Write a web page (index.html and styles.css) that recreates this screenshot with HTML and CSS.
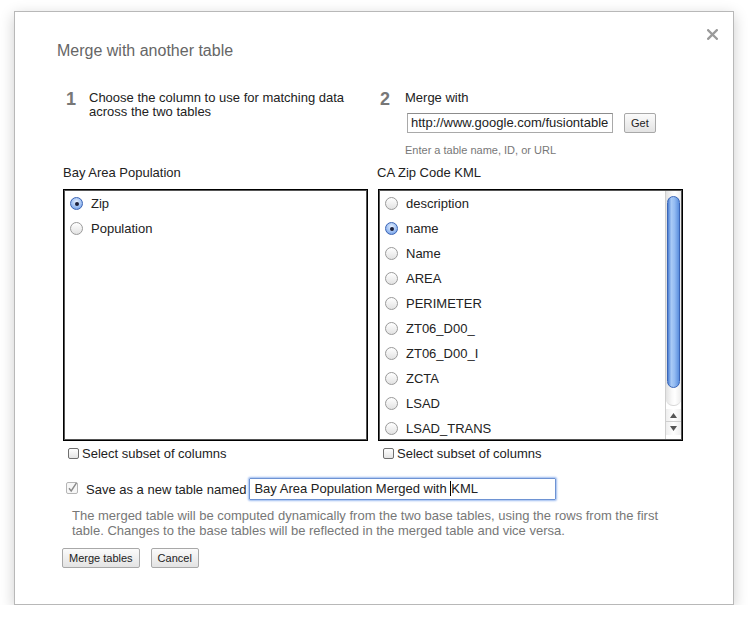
FILE: index.html
```html
<!DOCTYPE html>
<html>
<head>
<meta charset="utf-8">
<link rel="stylesheet" href="styles.css">
</head>
<body>
<div class="dialog">
  <svg class="close" width="11" height="11" viewBox="0 0 11 11"><path d="M1.2 1.2L9.8 9.8M9.8 1.2L1.2 9.8" stroke="#9a9a9a" stroke-width="2.3" stroke-linecap="square"/></svg>
  <h1 class="title">Merge with another table</h1>
  <div class="grid">
    <div class="step step-1">
      <span class="num">1</span>
      <div class="step-text">Choose the column to use for matching data<br>across the two tables</div>
    </div>
    <div class="step step-2">
      <span class="num">2</span>
      <div class="step-body">
        <div class="step-text">Merge with</div>
        <div class="url-row">
          <div class="url-input">http://www.google.com/fusiontable</div>
          <button class="btn get">Get</button>
        </div>
        <div class="hint">Enter a table name, ID, or URL</div>
      </div>
    </div>
    <div class="col-label">Bay Area Population</div>
    <div class="col-label col-label-right">CA Zip Code KML</div>
    <div class="list">
      <div class="items">
        <div class="opt"><span class="radio checked"></span>Zip</div>
        <div class="opt"><span class="radio"></span>Population</div>
      </div>
    </div>
    <div class="list">
      <div class="items">
        <div class="opt"><span class="radio"></span>description</div>
        <div class="opt"><span class="radio checked"></span>name</div>
        <div class="opt"><span class="radio"></span>Name</div>
        <div class="opt"><span class="radio"></span>AREA</div>
        <div class="opt"><span class="radio"></span>PERIMETER</div>
        <div class="opt"><span class="radio"></span>ZT06_D00_</div>
        <div class="opt"><span class="radio"></span>ZT06_D00_I</div>
        <div class="opt"><span class="radio"></span>ZCTA</div>
        <div class="opt"><span class="radio"></span>LSAD</div>
        <div class="opt"><span class="radio"></span>LSAD_TRANS</div>
      </div>
      <div class="scrollbar">
        <div class="track">
          <div class="thumb"></div>
        </div>
        <div class="arrow arrow-up"><svg width="7" height="5" viewBox="0 0 7 5"><path d="M3.5 0L7 5H0z" fill="#555"/></svg></div>
        <div class="arrow arrow-down"><svg width="7" height="5" viewBox="0 0 7 5"><path d="M0 0H7L3.5 5z" fill="#555"/></svg></div>
      </div>
    </div>
    <div class="subset"><span class="checkbox"></span>Select subset of columns</div>
    <div class="subset"><span class="checkbox"></span>Select subset of columns</div>
  </div>
  <div class="save-row">
    <span class="checkbox-checked"><svg width="12" height="12" viewBox="0 0 12 12"><rect x="0.5" y="0.5" width="11" height="11" rx="1.5" fill="#f7f7f7" stroke="#b5b5b5"/><path d="M3 6.2L5.2 9L10.5 0.8" fill="none" stroke="#8a8a8a" stroke-width="1.4"/></svg></span>
    <span class="save-label">Save as a new table named</span>
    <div class="name-input">Bay Area Population Merged with <span class="caret"></span>KML</div>
  </div>
  <p class="desc">The merged table will be computed dynamically from the two base tables, using the rows from the first<br>table. Changes to the base tables will be reflected in the merged table and vice versa.</p>
  <div class="actions">
    <button class="btn">Merge tables</button>
    <button class="btn">Cancel</button>
  </div>
</div>
</body>
</html>
```

FILE: styles.css
```css
* { box-sizing: border-box; }
html, body { margin: 0; padding: 0; background: #fff; }
body {
  font-family: "Liberation Sans", Arial, sans-serif;
  font-size: 13px;
  color: #222;
}
.dialog {
  position: relative;
  margin: 11px 0 0 14px;
  width: 720px;
  height: 594px;
  border: 1px solid #b8b8b8;
  background: #fff;
  box-shadow: 0 4px 14px rgba(0, 0, 0, 0.2);
  padding: 29px 50px 0 48px;
}
.close {
  position: absolute;
  top: 17px;
  right: 15px;
}
.title {
  margin: 0 0 0 -6px;
  font-size: 16px;
  line-height: 20px;
  font-weight: normal;
  color: #666;
}
.grid {
  margin-top: 30px;
  display: grid;
  grid-template-columns: 305px 305px;
  column-gap: 10px;
}
.step {
  display: flex;
  align-items: flex-start;
}
.step-1 { padding-left: 3px; }
.step-2 { padding-left: 2px; }
.num {
  display: block;
  width: 23px;
  flex: none;
  font-size: 18px;
  line-height: 20px;
  font-weight: bold;
  color: #777;
  margin-top: -2px;
}
.step-2 .num { width: 25px; }
.step-text {
  line-height: 14px;
  color: #222;
}
.url-row {
  display: flex;
  margin-top: 8px;
  margin-left: 2px;
}
.url-input {
  width: 206px;
  height: 20px;
  border: 1px solid #a9a9a9;
  border-top-color: #8c8c8c;
  padding: 0 3px;
  line-height: 18px;
  white-space: nowrap;
  overflow: hidden;
  color: #222;
}
.btn {
  font-family: "Liberation Sans", Arial, sans-serif;
  font-size: 11px;
  height: 20px;
  padding: 0 6px;
  border: 1px solid #a8a8a8;
  border-radius: 2px;
  background: linear-gradient(#fbfbfb, #e3e3e3);
  color: #222;
  line-height: 18px;
}
.get { margin-left: 11px; }
.hint {
  margin-top: 11px;
  font-size: 11px;
  line-height: 13px;
  color: #777;
}
.col-label {
  margin-top: 8px;
  line-height: 15px;
  color: #222;
}
.col-label-right { margin-left: -1px; }
.list {
  margin-top: 9px;
  height: 252px;
  border: 1px solid #000;
  box-shadow: inset 0 0 0 1px #555;
  display: flex;
  overflow: hidden;
}
.items {
  flex: 1;
  padding-top: 1px;
}
.opt {
  display: flex;
  align-items: center;
  height: 25px;
  padding-left: 6px;
  color: #222;
}
.radio {
  width: 13px;
  height: 13px;
  flex: none;
  border-radius: 50%;
  border: 1px solid #9a9a9a;
  background: linear-gradient(#ffffff, #e2e2e2);
  margin-right: 8px;
  display: flex;
  align-items: center;
  justify-content: center;
}
.radio.checked {
  border-color: #3b64b5;
  background: radial-gradient(circle at 50% 35%, #e6f0ff 0, #9fc0f2 55%, #5d8fe0 100%);
}
.radio.checked::after {
  content: "";
  width: 4px;
  height: 4px;
  border-radius: 50%;
  background: #1b1f3a;
}
.scrollbar {
  width: 16px;
  flex: none;
  margin: 1px 1px 1px 0;
  border-left: 1px solid #cfcfcf;
  display: flex;
  flex-direction: column;
  background: #fff;
}
.track {
  flex: 1;
  padding: 5px 1px 0 1px;
  background: linear-gradient(to right, #e2e2e2, #f9f9f9 40%, #ffffff 60%, #ececec);
  border-bottom: 1px solid #d8d8d8;
  border-radius: 0 0 7px 7px;
}
.thumb {
  height: 192px;
  border-radius: 7px;
  border: 1px solid #3a66b8;
  background: linear-gradient(to right, #4c7fd2, #a9cbf6 30%, #93bbf2 60%, #5b8fde);
}
.arrow {
  height: 13px;
  display: flex;
  align-items: center;
  justify-content: center;
  background: linear-gradient(to right, #eeeeee, #ffffff 50%, #eeeeee);
}
.arrow-up { margin-top: 3px; border-bottom: 1px solid #cfcfcf; }
.arrow-down { margin-bottom: 4px; }
.subset {
  margin-top: 5px;
  display: flex;
  align-items: center;
  line-height: 15px;
  padding-left: 5px;
  color: #222;
}
.checkbox {
  width: 11px;
  height: 11px;
  flex: none;
  border: 1px solid #6f6f6f;
  border-radius: 2px;
  background: linear-gradient(#ffffff, #e4e4e4);
  margin-right: 3px;
}
.save-row {
  margin-top: 17px;
  display: flex;
  align-items: center;
  height: 22px;
  padding-left: 3px;
}
.checkbox-checked {
  display: flex;
  width: 12px;
  height: 12px;
  margin-right: 8px;
  margin-top: -2px;
}
.save-label { color: #222; }
.name-input {
  margin-left: 3px;
  width: 307px;
  height: 22px;
  border: 1px solid #6e93d3;
  box-shadow: 0 0 2px 1px #9dbcf0;
  border-radius: 1px;
  padding: 0 4px;
  line-height: 20px;
  color: #222;
  white-space: nowrap;
}
.caret {
  display: inline-block;
  width: 1px;
  height: 15px;
  background: #000;
  vertical-align: -3px;
}
.desc {
  margin: 8px 0 0 9px;
  line-height: 15px;
  color: #777;
}
.actions {
  margin-top: 10px;
  margin-left: -1px;
  display: flex;
  gap: 11px;
}
```
